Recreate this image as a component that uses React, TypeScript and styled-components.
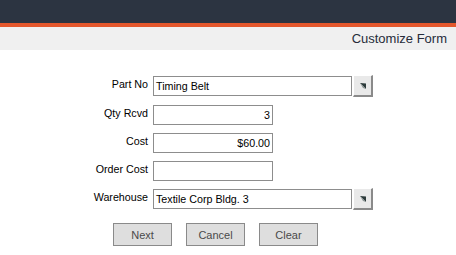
import React from 'react';
import styled, { createGlobalStyle } from 'styled-components';

const GlobalStyle = createGlobalStyle`
  body {
    margin: 0;
    background: #ffffff;
    font-family: "Liberation Sans", Arial, sans-serif;
  }
`;

const TopBar = styled.div`
  height: 23px;
  background-color: #2c3441;
  border-bottom: 4px solid #e4572c;
`;

const TitleBar = styled.div`
  height: 23px;
  background-color: #f0f0f0;
  display: flex;
  align-items: center;
  justify-content: flex-end;
  padding-right: 9px;
  font-size: 13px;
  color: #262c3a;
`;

const Form = styled.div`
  display: grid;
  grid-template-columns: 60px auto;
  column-gap: 5px;
  row-gap: 8px;
  padding: 26px 0 0 88px;
  font-size: 10.7px;
  color: #000;
`;

const Label = styled.label`
  justify-self: end;
  padding-top: 2px;
  line-height: 12px;
  white-space: nowrap;
`;

const Field = styled.div<{ $width: number; $align?: 'left' | 'right' }>`
  box-sizing: border-box;
  width: ${(p) => p.$width}px;
  height: 20px;
  border: 1px solid #8d8d8d;
  background: #fff;
  display: flex;
  align-items: center;
  justify-content: ${(p) => (p.$align === 'right' ? 'flex-end' : 'flex-start')};
  padding: 0 2px;
  white-space: nowrap;
`;

const SelectRow = styled.div`
  display: flex;
  align-items: flex-start;
  gap: 1px;
`;

const DropButton = styled.div`
  box-sizing: border-box;
  width: 20px;
  height: 22px;
  margin-top: -1px;
  background: #e9e9e9;
  border-top: 1px solid #ffffff;
  border-left: 1px solid #ffffff;
  border-right: 2px solid #8a8a8a;
  border-bottom: 2px solid #8a8a8a;
  display: flex;
  align-items: center;
  justify-content: center;
`;

const Buttons = styled.div`
  display: flex;
  gap: 14px;
  padding: 13px 0 0 113px;
`;

const Button = styled.button`
  box-sizing: border-box;
  width: 59px;
  height: 23px;
  background: #dedede;
  border: 1px solid #8a8a8a;
  font-family: "Liberation Sans", Arial, sans-serif;
  font-size: 11px;
  color: #4a4a4a;
  padding: 0;
`;

const Arrow = () => (
  <svg width="8" height="8" viewBox="0 0 8 8">
    <polygon points="1,1 7,1.5 7,7" fill="#2c3a3a" />
    <polygon points="1,1 7,7 4,6" fill="#8a9494" />
  </svg>
);

const Select: React.FC<{ value: string }> = ({ value }) => (
  <SelectRow>
    <Field $width={199}>{value}</Field>
    <DropButton>
      <Arrow />
    </DropButton>
  </SelectRow>
);

const App: React.FC = () => {
  return (
    <>
      <GlobalStyle />
      <TopBar />
      <TitleBar>Customize Form</TitleBar>
      <Form>
        <Label>Part No</Label>
        <Select value="Timing Belt" />
        <Label>Qty Rcvd</Label>
        <Field $width={120} $align="right">3</Field>
        <Label>Cost</Label>
        <Field $width={120} $align="right">$60.00</Field>
        <Label>Order Cost</Label>
        <Field $width={120} />
        <Label>Warehouse</Label>
        <Select value="Textile Corp Bldg. 3" />
      </Form>
      <Buttons>
        <Button>Next</Button>
        <Button>Cancel</Button>
        <Button>Clear</Button>
      </Buttons>
    </>
  );
};

export default App;
